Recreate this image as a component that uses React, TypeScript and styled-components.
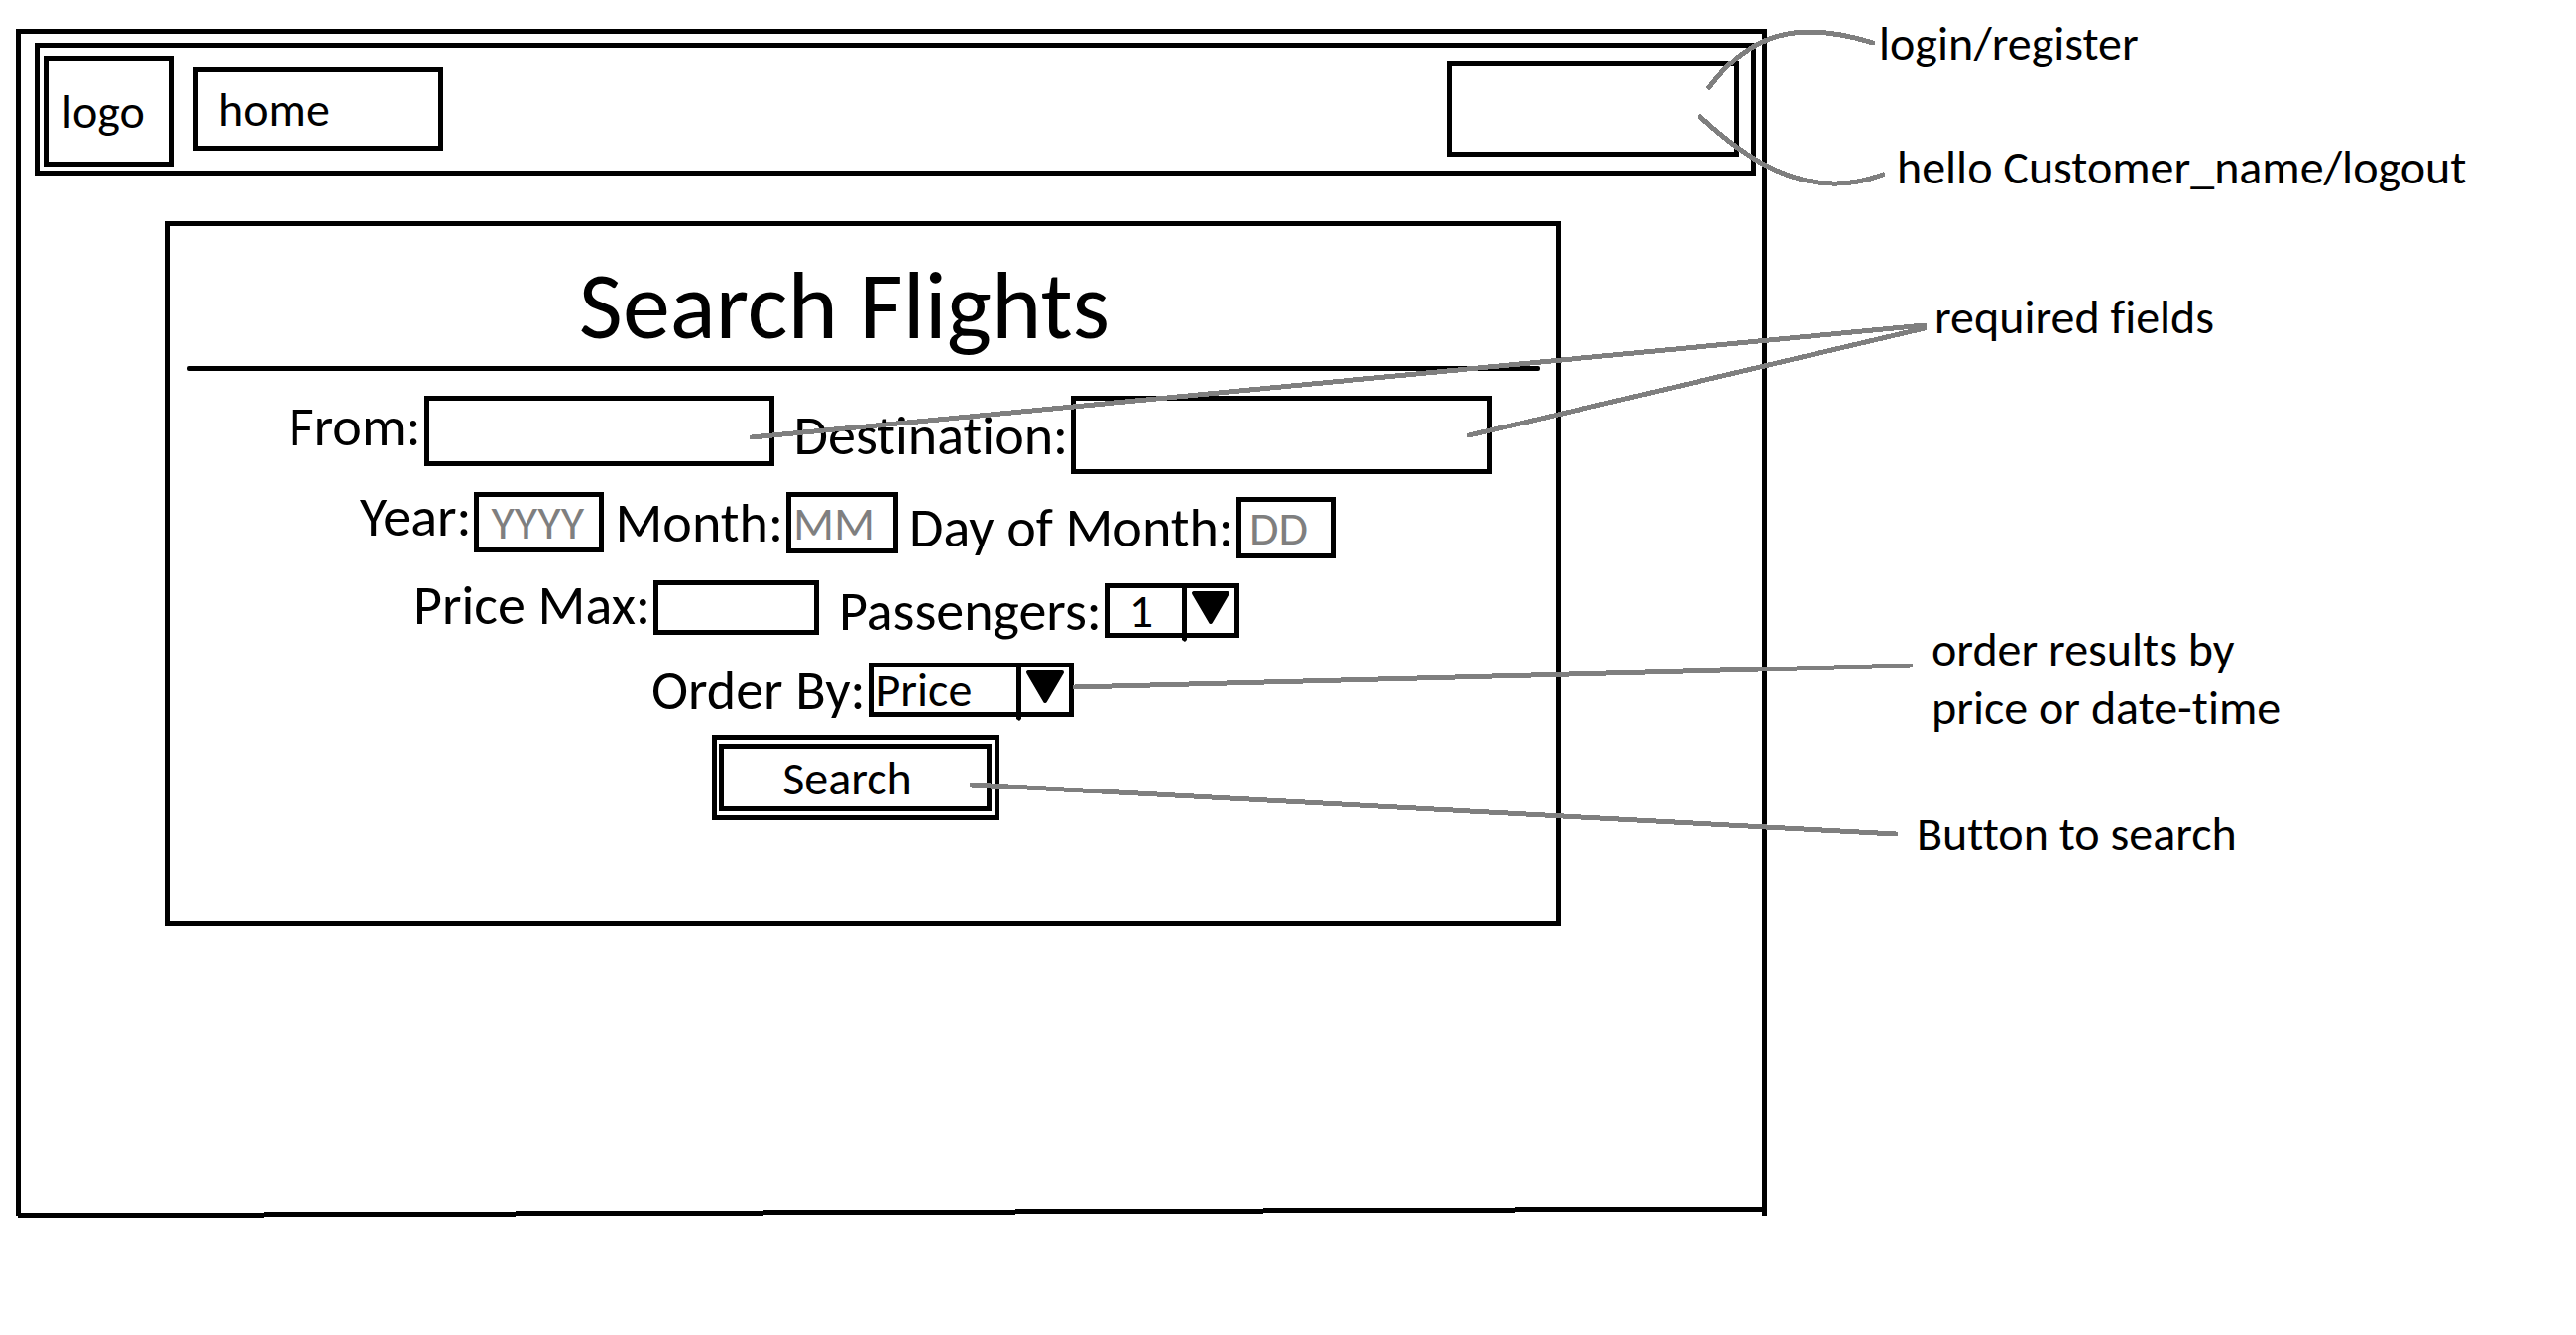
import React from "react";
import styled, { createGlobalStyle } from "styled-components";

const INK = "#000";
const GREY = "#7f7f7f";
const LINE = "5px solid " + INK;

const GlobalStyle = createGlobalStyle`
  *, *::before, *::after { box-sizing: border-box; }
  body { margin: 0; background: #fff; }
  body, button, input, select {
    font-family: Carlito, "Open Sans", "Noto Sans", sans-serif;
    font-size: 48px;
    font-weight: 400;
    font-variant-ligatures: none;
    color: ${INK};
  }
`;

const Page = styled.div`
  position: relative;
  display: grid;
  grid-template-columns: minmax(0, 1766fr) minmax(0, 816fr);
  align-items: start;
  min-height: 100vh;
  padding-left: 16px;
  overflow: hidden;
`;

const Frame = styled.div`
  display: flex;
  flex-direction: column;
  min-height: 1197px;
  margin-top: 29px;
  border: ${LINE};
  border-bottom: 0;
`;

const FrameBase = styled.svg`
  display: block;
  width: calc(100% + 10px);
  height: 12px;
  margin: auto -5px -3px;
`;

const Header = styled.header`
  display: flex;
  align-items: center;
  height: 134px;
  margin: 9px 6px 0 14px;
  padding: 0 12px 0 4px;
  border: ${LINE};
`;

const Logo = styled.div`
  display: flex;
  align-items: center;
  align-self: stretch;
  width: 131px;
  margin: 8px 20px 4px 0;
  padding-left: 13px;
  border: ${LINE};
`;

const HomeLink = styled.a`
  display: flex;
  align-items: center;
  width: 252px;
  height: 84px;
  padding-left: 20px;
  border: ${LINE};
  color: inherit;
  text-decoration: none;
`;

const AccountButton = styled.button`
  width: 295px;
  height: 96px;
  margin-left: auto;
  border: ${LINE};
  background: transparent;
`;

const Panel = styled.main`
  height: 711px;
  margin: 46px 203px 0 145px;
  border: ${LINE};
`;

const Title = styled.h1`
  margin: 0;
  padding: 21px 37px 0 0;
  font-size: 96px;
  font-weight: 400;
  line-height: 120px;
  text-align: center;
`;

const Rule = styled.hr`
  height: 5px;
  margin: 0 16px 25px 18px;
  border: 0;
  border-radius: 2px;
  background: ${INK};
`;

const Row = styled.div<{ $indent: number; $gap: number; $h: number; $after: number; $line?: number }>`
  display: flex;
  gap: ${(p) => p.$gap}px;
  min-height: ${(p) => p.$h}px;
  margin-bottom: ${(p) => p.$after}px;
  padding-left: ${(p) => p.$indent}px;
  line-height: ${(p) => p.$line ?? 50}px;
`;

const Field = styled.div<{ $low?: boolean; $top?: boolean }>`
  display: flex;
  align-items: ${(p) => (p.$top ? "flex-start" : "center")};
  align-self: ${(p) => (p.$low ? "flex-end" : "flex-start")};
`;

const Label = styled.label`
  padding-right: 3px;
  font-size: 56px;
  white-space: nowrap;
`;

const TextBox = styled.input<{ $w: number; $h: number; $pad?: number }>`
  width: ${(p) => p.$w}px;
  height: ${(p) => p.$h}px;
  padding: 0 0 0 ${(p) => p.$pad ?? 6}px;
  border: ${LINE};
  border-radius: 0;
  background: transparent;
  &::placeholder { color: ${GREY}; opacity: 1; }
`;

const SelectWrap = styled.span`
  position: relative;
  display: block;
`;

const SelectBox = styled.select<{ $w: number; $pad: number }>`
  display: block;
  appearance: none;
  width: ${(p) => p.$w}px;
  height: 55px;
  padding: 0 0 0 ${(p) => p.$pad}px;
  border: ${LINE};
  border-radius: 0;
  background: transparent;
  line-height: 45px;
`;

const Arrow = styled.svg`
  position: absolute;
  top: 5px;
  right: 5px;
  width: 53px;
  height: 54px;
  pointer-events: none;
`;

const SearchButton = styled.button`
  display: flex;
  width: 290px;
  height: 86px;
  margin-left: 547px;
  padding: 4px 3px 4px 2px;
  border: ${LINE};
  background: transparent;
`;

const ButtonFace = styled.span`
  display: flex;
  flex: 1;
  align-items: center;
  justify-content: center;
  align-self: stretch;
  padding-right: 16px;
  border: ${LINE};
`;

const Notes = styled.aside`
  padding-top: 14px;
  line-height: 59px;
`;

const Note = styled.p<{ $indent: number; $after?: number }>`
  margin: 0 0 ${(p) => p.$after ?? 0}px;
  padding-left: ${(p) => p.$indent}px;
  white-space: nowrap;
`;

const Leaders = styled.svg`
  position: absolute;
  top: 0;
  left: 0;
  width: 100%;
  height: 1346px;
  pointer-events: none;
  fill: none;
  stroke: ${GREY};
  stroke-width: 5px;
  stroke-linecap: round;
`;

const LEADERS = [
  "M1724 88 C1766 32 1815 20 1889 43",
  "M1715 118 C1752 152 1817 207 1899 176",
  "M758 441 L1941 328",
  "M1482 439 L1941 331",
  "M1084 693 L1927 671",
  "M980 791 L1912 841",
];

type DropDownProps = { id: string; width: number; pad: number; options: string[] };

function DropDown({ id, width, pad, options }: DropDownProps) {
  return (
    <SelectWrap>
      <SelectBox id={id} $w={width} $pad={pad} defaultValue={options[0]}>
        {options.map((option) => (
          <option key={option}>{option}</option>
        ))}
      </SelectBox>
      <Arrow viewBox="0 0 53 54" aria-hidden="true">
        <path d="M0 0H5V52L3 54L0 52Z" />
        <path d="M12 5H46L29 34Z" stroke="#000" strokeWidth="4" strokeLinejoin="round" />
      </Arrow>
    </SelectWrap>
  );
}

export default function App() {
  return (
    <>
      <GlobalStyle />
      <Page>
        <Frame>
          <Header>
            <Logo>logo</Logo>
            <HomeLink href="#home">home</HomeLink>
            <AccountButton type="button" aria-label="Account" />
          </Header>
          <Panel>
            <Title>Search Flights</Title>
            <Rule />
            <form onSubmit={(event) => event.preventDefault()}>
              <Row $indent={120} $gap={20} $h={79} $after={18} $line={62}>
                <Field $top>
                  <Label htmlFor="from">From:</Label>
                  <TextBox id="from" $w={353} $h={71} />
                </Field>
                <Field $low>
                  <Label htmlFor="destination">Destination:</Label>
                  <TextBox id="destination" $w={425} $h={79} />
                </Field>
              </Row>
              <Row $indent={192} $gap={11} $h={67} $after={22}>
                <Field $top>
                  <Label htmlFor="year">Year:</Label>
                  <TextBox id="year" placeholder="YYYY" $w={131} $h={61} $pad={12} />
                </Field>
                <Field>
                  <Label htmlFor="month">Month:</Label>
                  <TextBox id="month" placeholder="MM" $w={113} $h={62} $pad={2} />
                </Field>
                <Field $low>
                  <Label htmlFor="day">Day of Month:</Label>
                  <TextBox id="day" placeholder="DD" $w={100} $h={62} $pad={8} />
                </Field>
              </Row>
              <Row $indent={246} $gap={20} $h={58} $after={25}>
                <Field $top>
                  <Label htmlFor="price">Price Max:</Label>
                  <TextBox id="price" $w={167} $h={55} />
                </Field>
                <Field $low>
                  <Label htmlFor="passengers">Passengers:</Label>
                  <DropDown id="passengers" width={136} pad={20} options={["1", "2", "3", "4"]} />
                </Field>
              </Row>
              <Row $indent={486} $gap={0} $h={55} $after={18}>
                <Field>
                  <Label htmlFor="order">Order By:</Label>
                  <DropDown id="order" width={207} pad={3} options={["Price", "Date-time"]} />
                </Field>
              </Row>
              <SearchButton type="submit">
                <ButtonFace>Search</ButtonFace>
              </SearchButton>
            </form>
          </Panel>
          <FrameBase viewBox="0 0 1766 12" preserveAspectRatio="none" aria-hidden="true">
            <path d="M2 9 L1764 2" stroke="#000" strokeWidth="5" shapeRendering="crispEdges" />
          </FrameBase>
        </Frame>
        <Notes>
          <Note $indent={113} $after={66}>login/register</Note>
          <Note $indent={131} $after={92}>hello Customer_name/logout</Note>
          <Note $indent={169} $after={276}>required fields</Note>
          <Note $indent={166} $after={68}>
            order results by
            <br />
            price or date-time
          </Note>
          <Note $indent={151}>Button to search</Note>
        </Notes>
        <Leaders viewBox="0 0 2598 1346" preserveAspectRatio="none" aria-hidden="true">
          {LEADERS.map((d) => (
            <path key={d} d={d} shapeRendering="crispEdges" />
          ))}
        </Leaders>
      </Page>
    </>
  );
}
